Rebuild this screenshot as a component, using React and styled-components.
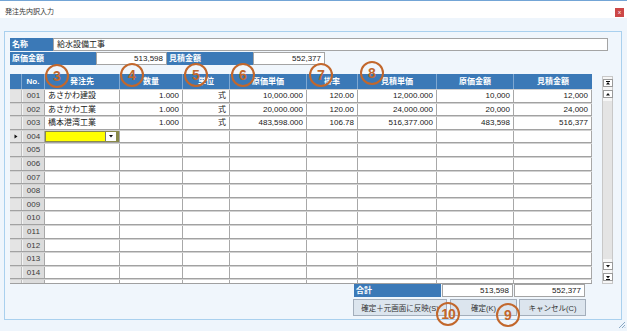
import React from 'react';
import styled, { createGlobalStyle } from 'styled-components';

const GlobalStyle = createGlobalStyle`
  html, body {
    margin: 0;
    padding: 0;
    background: #ffffff;
  }
  body {
    font-family: "Liberation Sans", "Noto Sans CJK JP", sans-serif;
    color: #202020;
  }
`;

const ACCENT = '#3b79b7';
const MARK = '#c2672c';

const Window = styled.div`
  position: relative;
  width: 627px;
  height: 331px;
  display: flex;
  flex-direction: column;
  overflow: hidden;
`;

const TitleBar = styled.div`
  height: 17px;
  border-top: 1px solid #73a5d6;
  background: #ffffff;
  display: flex;
  align-items: center;
  justify-content: space-between;
  padding: 0 3px 0 5px;
`;

const Title = styled.span`
  font-size: 7px;
  color: #333;
  margin-top: 2px;
`;

const CloseButton = styled.div`
  width: 9px;
  height: 9px;
  background: #cc4747;
  color: #fff;
  font-size: 6px;
  line-height: 8px;
  text-align: center;
  margin-top: 6px;
`;

const Body = styled.div`
  flex: 1;
  background: #eef5fc;
  padding: 13px 5px 11px 4px;
  display: flex;
`;

const Panel = styled.div`
  position: relative;
  flex: 1;
  border: 1px solid #a9d0ee;
  background: #f0f6fc;
  padding: 6px 5px 0 5px;
  display: flex;
  flex-direction: column;
`;

const FieldRow = styled.div`
  display: flex;
  height: 13px;
  margin-bottom: 1px;
`;

const Label = styled.div`
  width: ${({ w }) => w}px;
  box-sizing: border-box;
  background: ${ACCENT};
  color: #fff;
  font-weight: bold;
  font-size: 8px;
  line-height: 13px;
  padding-left: 2px;
`;

const Input = styled.div`
  width: ${({ w }) => w}px;
  box-sizing: border-box;
  background: #fff;
  border: 1px solid #a4a4a4;
  font-size: 8px;
  line-height: 11px;
  padding: 0 3px;
  text-align: ${({ align }) => align || 'left'};
`;

const GridArea = styled.div`
  display: flex;
  margin-top: 8px;
  height: 210px;
`;

const Grid = styled.div`
  width: 582px;
  display: flex;
  flex-direction: column;
  border-bottom: 1px solid #a0a0a0;
`;

const COLS = '12px 23px 75px 63px 47px 77px 51px 79px 77px 78px';

const HeaderRow = styled.div`
  display: grid;
  grid-template-columns: ${COLS};
  height: 15px;
  background: ${ACCENT};
`;

const HeaderCell = styled.div`
  color: #fff;
  font-weight: bold;
  font-size: 8px;
  line-height: 15px;
  text-align: center;
  border-right: 1px solid #7fa8d2;
  &:last-child {
    border-right: none;
  }
`;

const Rows = styled.div`
  height: 194px;
  overflow: hidden;
  background: #fff;
`;

const Row = styled.div`
  display: grid;
  grid-template-columns: ${COLS};
  height: 13.6px;
  box-sizing: border-box;
  border-top: 1px solid #d2d2d2;
  border-bottom: 1px solid #a2a2a2;
`;

const Cell = styled.div`
  position: relative;
  font-size: 8px;
  line-height: 11px;
  padding: 0 3px;
  overflow: hidden;
  white-space: nowrap;
  text-align: ${({ align }) => align || 'left'};
  border-right: 1px solid #a8a8a8;
`;

const Indicator = styled.div`
  background: #e4e4e4;
  border-right: 1px solid #bdbdbd;
  display: flex;
  align-items: center;
  justify-content: center;
`;

const NoCell = styled.div`
  background: #dcdcdc;
  border-left: 1px solid #f4f4f4;
  border-right: 1px solid #a8a8a8;
  font-size: 8px;
  line-height: 11px;
  text-align: center;
  color: #3a3a3a;
`;

const ComboCell = styled.div`
  display: flex;
  background: #ffff00;
  border: 1px solid #8a8a4a;
  border-right-width: 3px;
  height: 100%;
  box-sizing: border-box;
`;

const ComboFill = styled.div`
  flex: 1;
`;

const ComboButton = styled.div`
  width: 10px;
  background: #fff;
  border-left: 1px solid #777;
  display: flex;
  align-items: center;
  justify-content: center;
`;

const Scrollbar = styled.div`
  width: 11px;
  margin: 2px 0 0 10px;
  height: 208px;
  box-sizing: border-box;
  border: 1px solid #c8c8c8;
  background: #e4e4e4;
  display: flex;
  flex-direction: column;
  justify-content: space-between;
`;

const ScrollEnd = styled.div`
  background: #f6f6f6;
  display: flex;
  flex-direction: column;
  align-items: center;
  gap: 3px;
  padding: ${({ bottom }) => (bottom ? '3px 0 2px' : '2px 0 3px')};
`;

const ScrollButton = styled.div`
  width: 8px;
  height: 6px;
  background: #fff;
  border: 1px solid #9a9a9a;
  display: flex;
  align-items: center;
  justify-content: center;
`;

const Footer = styled.div`
  padding-left: 343px;
  display: flex;
  flex-direction: column;
`;

const TotalRow = styled.div`
  display: flex;
  gap: 1px;
  height: 13px;
  margin-left: 1px;
`;

const ButtonRow = styled.div`
  display: flex;
  gap: 2px;
  margin-top: 2px;
`;

const Button = styled.div`
  width: ${({ w }) => w}px;
  height: 17px;
  box-sizing: border-box;
  background: #dce5ee;
  border: 1px solid #a3aebb;
  font-size: 7.5px;
  color: #333;
  display: flex;
  align-items: center;
  justify-content: center;
  margin-right: ${({ mr }) => mr || 0}px;
`;

const Mark = styled.div`
  position: absolute;
  left: ${({ x }) => x - 12}px;
  top: ${({ y }) => y - 12}px;
  width: 20px;
  height: 20px;
  border: 2px solid ${MARK};
  border-radius: 50%;
  color: ${MARK};
  font-family: "Liberation Sans", sans-serif;
  font-weight: bold;
  font-size: 14px;
  line-height: 20px;
  text-align: center;
  letter-spacing: ${({ wide }) => (wide ? '-1px' : '0')};
`;

const Grip = styled.svg`
  position: absolute;
  right: 1px;
  bottom: 2px;
`;

const headers = ['', 'No.', '発注先', '数量', '単位', '原価単価', '掛率', '見積単価', '原価金額', '見積金額'];

const data = [
  ['あさかわ建設', '1.000', '式', '10,000.000', '120.00', '12,000.000', '10,000', '12,000'],
  ['あさかわ工業', '1.000', '式', '20,000.000', '120.00', '24,000.000', '20,000', '24,000'],
  ['橋本港湾工業', '1.000', '式', '483,598.000', '106.78', '516,377.000', '483,598', '516,377'],
];

const marks = [
  { n: '3', x: 57, y: 76 },
  { n: '4', x: 132, y: 75 },
  { n: '5', x: 196, y: 75 },
  { n: '6', x: 243, y: 75 },
  { n: '7', x: 321, y: 75 },
  { n: '8', x: 372, y: 73 },
  { n: '10', x: 448, y: 314 },
  { n: '9', x: 508, y: 315 },
];

const Triangle = ({ down, bar }) => (
  <svg width="6" height="5" viewBox="0 0 6 5">
    {down ? <path d="M1 1h4L3 3.5z" fill="#111" /> : <path d="M1 3.5h4L3 1z" fill="#111" />}
    {bar && (down ? <rect x="1" y="4" width="4" height="1" fill="#111" /> : <rect x="1" y="0" width="4" height="1" fill="#111" />)}
  </svg>
);

function DataRow({ no, values, current }) {
  const v = values || [];
  return (
    <Row>
      <Indicator>
        {current && (
          <svg width="4" height="5" viewBox="0 0 4 5">
            <path d="M0.5 0.5L3.5 2.5L0.5 4.5z" fill="#111" />
          </svg>
        )}
      </Indicator>
      <NoCell>{no}</NoCell>
      {current ? (
        <Cell style={{ padding: 0 }}>
          <ComboCell>
            <ComboFill />
            <ComboButton>
              <Triangle down />
            </ComboButton>
          </ComboCell>
        </Cell>
      ) : (
        <Cell>{v[0]}</Cell>
      )}
      <Cell align="right">{v[1]}</Cell>
      <Cell align="right">{v[2]}</Cell>
      <Cell align="right">{v[3]}</Cell>
      <Cell align="right">{v[4]}</Cell>
      <Cell align="right">{v[5]}</Cell>
      <Cell align="right">{v[6]}</Cell>
      <Cell align="right">{v[7]}</Cell>
    </Row>
  );
}

export default function App() {
  const rows = Array.from({ length: 15 }, (_, i) => String(i + 1).padStart(3, '0'));
  return (
    <Window>
      <GlobalStyle />
      <TitleBar>
        <Title>発注先内訳入力</Title>
        <CloseButton>x</CloseButton>
      </TitleBar>
      <Body>
        <Panel>
          <FieldRow>
            <Label w={43}>名称</Label>
            <Input w={555}>給水設備工事</Input>
          </FieldRow>
          <FieldRow>
            <Label w={86}>原価金額</Label>
            <Input w={71} align="right">513,598</Input>
            <Label w={86}>見積金額</Label>
            <Input w={72} align="right">552,377</Input>
          </FieldRow>
          <GridArea>
            <Grid>
              <HeaderRow>
                {headers.map((h, i) => (
                  <HeaderCell key={i}>{h}</HeaderCell>
                ))}
              </HeaderRow>
              <Rows>
                {rows.map((no, i) => (
                  <DataRow key={no} no={no} values={data[i]} current={i === 3} />
                ))}
              </Rows>
            </Grid>
            <Scrollbar>
              <ScrollEnd>
                <ScrollButton>
                  <Triangle bar />
                </ScrollButton>
                <ScrollButton>
                  <Triangle />
                </ScrollButton>
              </ScrollEnd>
              <ScrollEnd bottom>
                <ScrollButton>
                  <Triangle down />
                </ScrollButton>
                <ScrollButton>
                  <Triangle down bar />
                </ScrollButton>
              </ScrollEnd>
            </Scrollbar>
          </GridArea>
          <Footer>
            <TotalRow>
              <Label w={87}>合計</Label>
              <Input w={71} align="right">513,598</Input>
              <Input w={71} align="right">552,377</Input>
            </TotalRow>
            <ButtonRow>
              <Button w={94} mr={1}>確定＋元画面に反映(S)</Button>
              <Button w={67}>確定(K)</Button>
              <Button w={67}>キャンセル(C)</Button>
            </ButtonRow>
          </Footer>
        </Panel>
      </Body>
      {marks.map((m) => (
        <Mark key={m.n} x={m.x} y={m.y} wide={m.n.length > 1}>
          {m.n}
        </Mark>
      ))}
      <Grip width="8" height="8" viewBox="0 0 8 8">
        <path d="M7 1L1 7M7 4L4 7M7 6.5L6.5 7" stroke="#8aa8c4" strokeWidth="1" />
      </Grip>
    </Window>
  );
}
